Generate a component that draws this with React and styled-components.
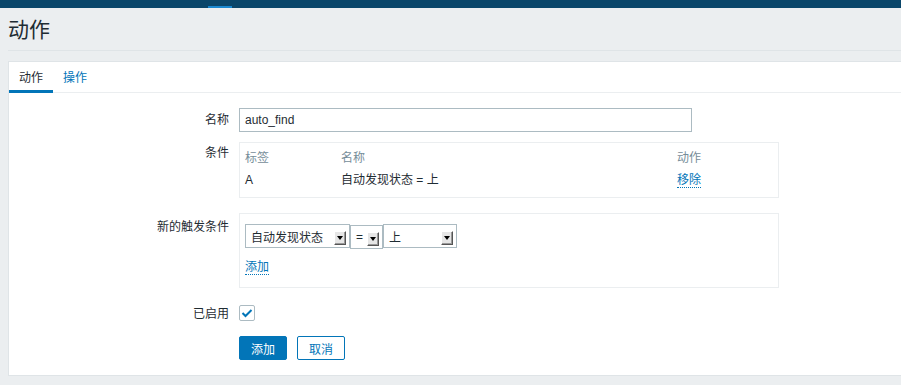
import React from 'react';
import styled, { createGlobalStyle } from 'styled-components';

const GlobalStyle = createGlobalStyle`
	html, body {
		margin: 0;
		padding: 0;
		background: #ebeef0;
		font-family: 'Liberation Sans', 'Noto Sans CJK SC', sans-serif;
		font-size: 12px;
		color: #1f2c33;
		overflow: hidden;
	}
`;

const TopBar = styled.div`
	height: 8px;
	background: #0a466a;
	position: relative;
	&::after {
		content: '';
		position: absolute;
		left: 208px;
		width: 24px;
		bottom: 0;
		height: 2px;
		background: #1a88d0;
	}
`;

const Page = styled.div`
	padding: 0 0 0 8px;
`;

const Header = styled.header`
	height: 42px;
	border-bottom: 1px solid #dfe4e7;
	display: flex;
	align-items: center;
	h1 {
		margin: 0;
		font-size: 21px;
		font-weight: 400;
		color: #1f2c33;
		line-height: 1;
	}
`;

const Panel = styled.section`
	margin-top: 10px;
	background: #fff;
	border: 1px solid #dfe4e7;
	border-right: none;
	height: 313px;
`;

const Tabs = styled.nav`
	display: flex;
	height: 30px;
	border-bottom: 1px solid #ebeef0;
`;

const Tab = styled.a`
	padding: 0 10px;
	display: flex;
	align-items: center;
	color: ${(p) => (p.$active ? '#1f2c33' : '#0275b8')};
	border-bottom: 3px solid ${(p) => (p.$active ? '#0275b8' : 'transparent')};
	margin-bottom: -1px;
	padding-top: 1px;
`;

const Form = styled.div`
	display: grid;
	grid-template-columns: 230px 1fr;
	padding-top: 15px;
`;

const Label = styled.div`
	text-align: right;
	padding-right: 10px;
	padding-top: ${(p) => p.$top || 0}px;
	line-height: 14px;
`;

const Cell = styled.div`
	margin-bottom: ${(p) => p.$gap || 0}px;
`;

const TextInput = styled.div`
	width: 453px;
	height: 24px;
	box-sizing: border-box;
	border: 1px solid #acbbc2;
	padding: 0 5px;
	display: flex;
	align-items: center;
	font-size: 12px;
`;

const Box = styled.div`
	width: 540px;
	box-sizing: border-box;
	border: 1px solid #ebeef0;
	padding: ${(p) => p.$pad || '5px'};
`;

const Table = styled.table`
	border-collapse: collapse;
	width: 100%;
	th, td {
		text-align: left;
		padding: 0;
		font-weight: 400;
		line-height: 14px;
		vertical-align: top;
	}
	th {
		color: #768d99;
		padding-top: 3px;
	}
	td {
		padding-top: 8px;
	}
`;

const Link = styled.a`
	color: #0275b8;
	border-bottom: 1px dotted #0275b8;
	text-decoration: none;
	display: inline-block;
	line-height: 14px;
`;

const Selects = styled.div`
	display: flex;
	align-items: flex-start;
	margin-bottom: 11px;
`;

const Select = styled.div`
	width: ${(p) => p.$w}px;
	height: 24px;
	margin-top: ${(p) => p.$dy || 0}px;
	box-sizing: border-box;
	border: 1px solid #acbbc2;
	display: flex;
	align-items: center;
	justify-content: space-between;
	padding: 0 3px 0 5px;
	font-size: 12px;
	color: #1f2c33;
`;

const Arrow = styled.span`
	width: 12px;
	height: 14px;
	box-sizing: border-box;
	background: #e6e6e6;
	border-top: 1px solid #fff;
	border-left: 1px solid #fff;
	border-right: 1px solid #555;
	border-bottom: 1px solid #555;
	box-shadow: inset -1px -1px 0 #999;
	display: flex;
	align-items: center;
	justify-content: center;
	margin-top: 3px;
	&::before {
		content: '';
		border-left: 3px solid transparent;
		border-right: 3px solid transparent;
		border-top: 4px solid #000;
	}
`;

const Checkbox = styled.div`
	width: 16px;
	height: 16px;
	box-sizing: border-box;
	border: 1px solid #acbbc2;
	border-radius: 2px;
	display: flex;
	align-items: center;
	justify-content: center;
	margin-top: 4px;
`;

const Buttons = styled.div`
	display: flex;
	gap: 10px;
`;

const Button = styled.button`
	height: 24px;
	width: 48px;
	font-family: inherit;
	font-size: 12px;
	border-radius: 2px;
	border: 1px solid #0275b8;
	background: ${(p) => (p.$primary ? '#0275b8' : '#fff')};
	color: ${(p) => (p.$primary ? '#fff' : '#0275b8')};
	padding: 0;
`;

export default function App() {
	return (
		<>
			<GlobalStyle />
			<TopBar />
			<Page>
				<Header>
					<h1>动作</h1>
				</Header>
				<Panel>
					<Tabs>
						<Tab $active>动作</Tab>
						<Tab>操作</Tab>
					</Tabs>
					<Form>
						<Label $top={5}>名称</Label>
						<Cell $gap={10}>
							<TextInput>auto_find</TextInput>
						</Cell>

						<Label $top={4}>条件</Label>
						<Cell $gap={15}>
							<Box $pad="5px 5px 9px">
								<Table>
									<colgroup>
										<col style={{ width: 96 }} />
										<col style={{ width: 336 }} />
										<col />
									</colgroup>
									<thead>
										<tr>
											<th>标签</th>
											<th>名称</th>
											<th>动作</th>
										</tr>
									</thead>
									<tbody>
										<tr>
											<td>A</td>
											<td>自动发现状态 = 上</td>
											<td>
												<Link>移除</Link>
											</td>
										</tr>
									</tbody>
								</Table>
							</Box>
						</Cell>

						<Label $top={7}>新的触发条件</Label>
						<Cell $gap={13}>
							<Box $pad="10px 5px 12px">
								<Selects>
									<Select $w={105}>
										自动发现状态
										<Arrow />
									</Select>
									<Select $w={33} $dy={1}>
										=
										<Arrow />
									</Select>
									<Select $w={74}>
										上
										<Arrow />
									</Select>
								</Selects>
								<Link>添加</Link>
							</Box>
						</Cell>

						<Label $top={6}>已启用</Label>
						<Cell $gap={15}>
							<Checkbox>
								<svg width="12" height="10" viewBox="0 0 12 10">
									<path d="M1.5 5 L4.5 8 L10.5 2" fill="none" stroke="#0275b8" strokeWidth="2" />
								</svg>
							</Checkbox>
						</Cell>

						<div />
						<Cell>
							<Buttons>
								<Button $primary>添加</Button>
								<Button>取消</Button>
							</Buttons>
						</Cell>
					</Form>
				</Panel>
			</Page>
		</>
	);
}
